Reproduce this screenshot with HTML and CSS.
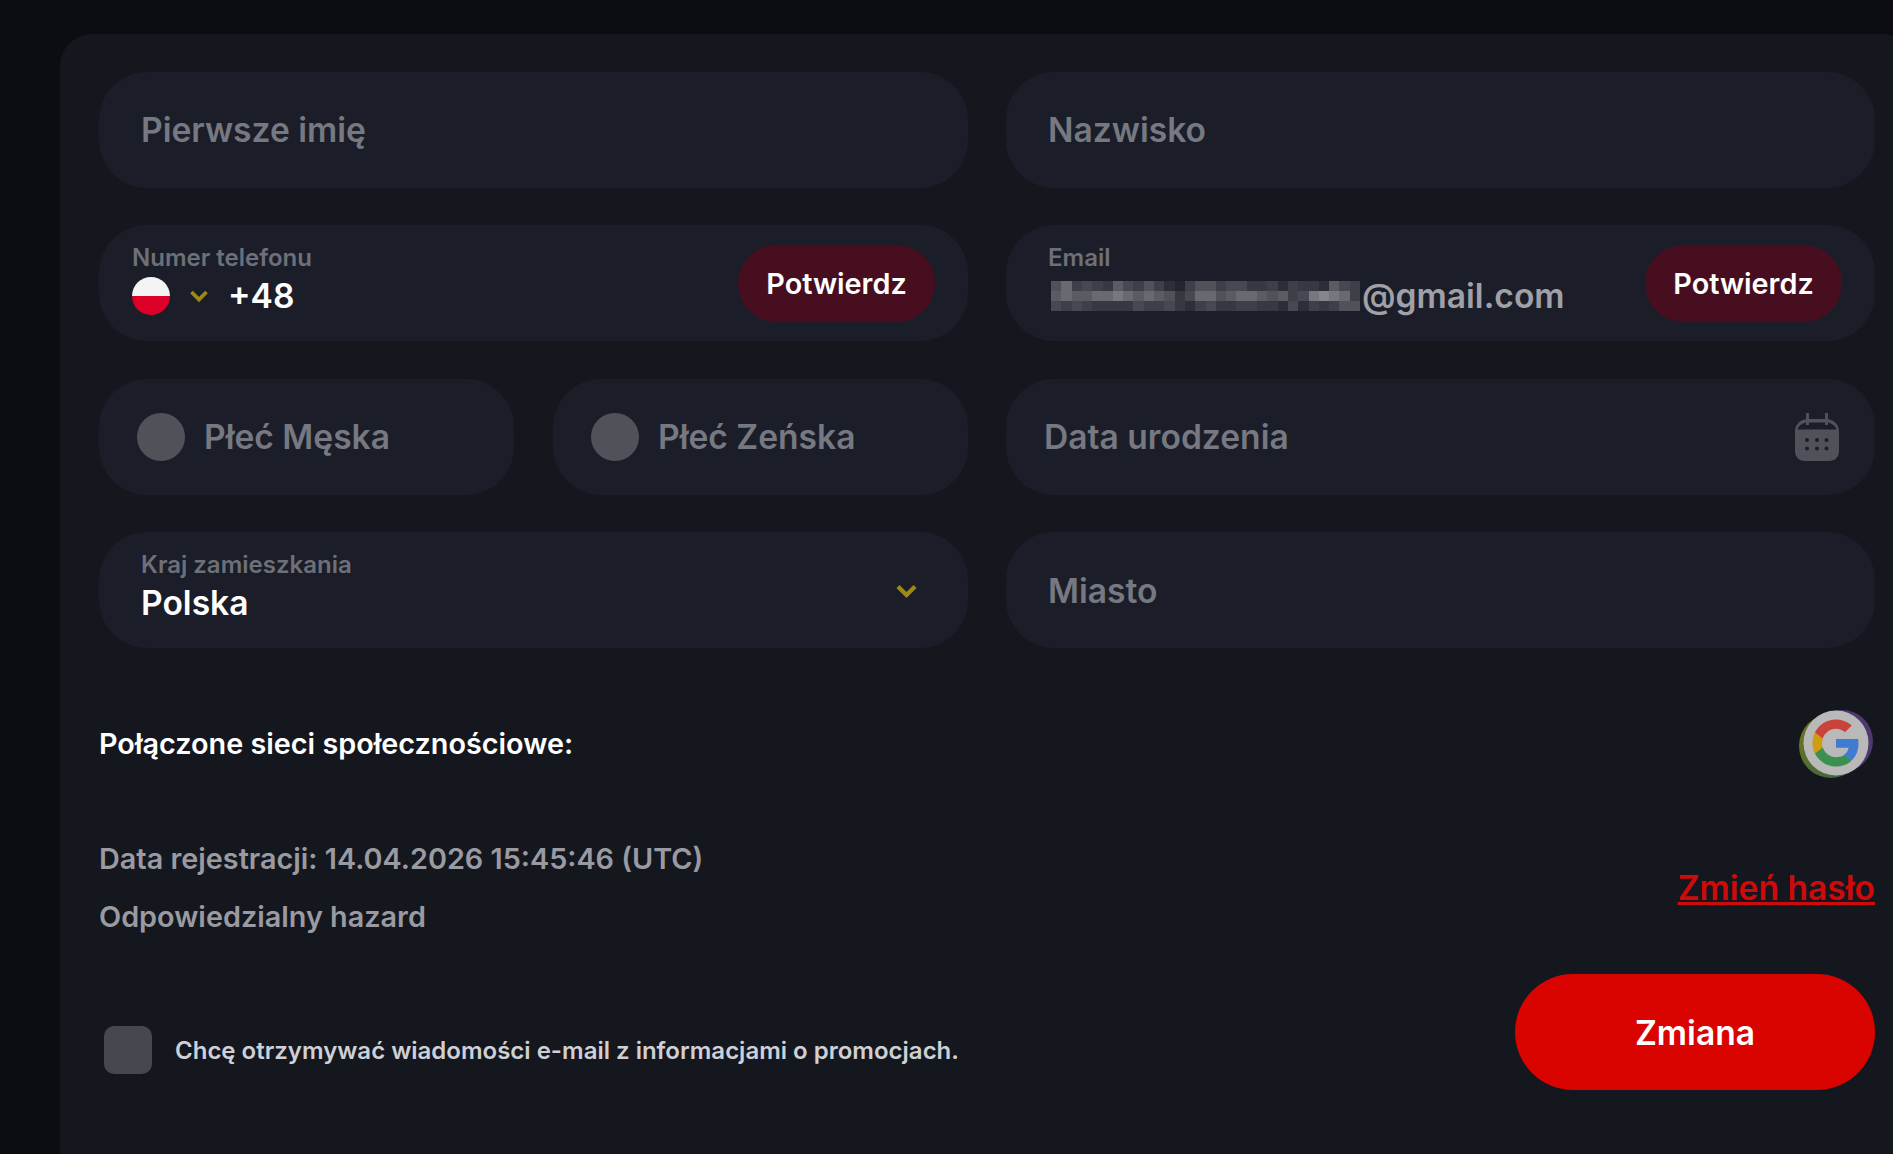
FILE: index.html
```html
<!DOCTYPE html>
<html lang="pl">
<head>
    <meta charset="UTF-8">
    <meta name="viewport" content="width=device-width, initial-scale=1.0">
    <title>Profil</title>
    <link rel="stylesheet" href="styles.css">
</head>
<body>
    <div class="panel">
        <div class="form-grid">
            <div class="field field-plain">Pierwsze imię</div>
            <div class="field field-plain">Nazwisko</div>

            <div class="field field-phone">
                <div class="field-body">
                    <div class="field-label">Numer telefonu</div>
                    <div class="phone-row">
                        <svg class="flag" viewBox="0 0 38 38">
                            <defs><clipPath id="flag-clip"><circle cx="19" cy="19" r="19"/></clipPath></defs>
                            <g clip-path="url(#flag-clip)">
                                <rect width="38" height="19" fill="#f4f4f4"/>
                                <rect y="19" width="38" height="19" fill="#dc0028"/>
                            </g>
                        </svg>
                        <svg class="chevron" viewBox="0 0 20 14"><path d="M2.500 3 L10 10.500 L17.500 3" fill="none" stroke="#9c8a14" stroke-width="3.8"/></svg>
                        <span class="phone-code">+48</span>
                    </div>
                </div>
                <button class="confirm">Potwierdz</button>
            </div>
            <div class="field field-email">
                <div class="field-body">
                    <div class="field-label">Email</div>
                    <div class="email-row">
                        <div class="blur-mask" id="blur-mask"></div>
                        <span>@gmail.com</span>
                    </div>
                </div>
                <button class="confirm">Potwierdz</button>
            </div>

            <div class="gender-pair">
                <div class="field field-gender"><span class="radio"></span>Płeć Męska</div>
                <div class="field field-gender"><span class="radio"></span>Płeć Zeńska</div>
            </div>
            <div class="field field-date">
                <span>Data urodzenia</span>
                <svg class="calendar" viewBox="0 0 44 48">
                    <path fill="#50525a" d="M11 0h3v6h16V0h3v6.200C39.500 7 44 12 44 18v20c0 6-4 10-10 10H10C4 48 0 44 0 38V18C0 12 4.500 7 11 6.200z"/>
                    <path fill="#1b1e28" d="M11 9.500v2.500h3V9.500h16V12h3V9.500C37 10.500 40.500 13 41.500 16.500h-39C3.500 13 7 10.500 11 9.500z"/>
                    <g fill="#1b1e28">
                        <circle cx="12" cy="27" r="2"/><circle cx="22" cy="27" r="2"/><circle cx="31.500" cy="27" r="2"/>
                        <circle cx="12" cy="35.500" r="2"/><circle cx="22" cy="35.500" r="2"/><circle cx="31.500" cy="35.500" r="2"/>
                    </g>
                </svg>
            </div>

            <div class="field field-country">
                <div class="field-body">
                    <div class="field-label">Kraj zamieszkania</div>
                    <div class="country-value">Polska</div>
                </div>
                <svg class="chevron" viewBox="0 0 20 14"><path d="M2.500 3 L10 10.500 L17.500 3" fill="none" stroke="#9c8a14" stroke-width="3.8"/></svg>
            </div>
            <div class="field field-plain">Miasto</div>
        </div>

        <div class="social-row">
            <div class="social-title">Połączone sieci społecznościowe:</div>
            <svg class="google" viewBox="0 -2 78 70">
                <defs>
                    <linearGradient id="google-back" x1="0" y1="0" x2="0.700" y2="1">
                        <stop offset="0" stop-color="#7a7220"/>
                        <stop offset="1" stop-color="#3b6a3c"/>
                    </linearGradient>
                </defs>
                <circle cx="45" cy="31" r="31" fill="#4c3a6c"/>
                <circle cx="34" cy="36" r="32" fill="url(#google-back)"/>
                <circle cx="39" cy="33" r="32.500" fill="#b9b9b9"/>
                <g transform="translate(15.500 9.500) scale(0.979)">
                    <path fill="#3f7bd0" d="M47 24.500c0-1.600-.1-3.200-.4-4.700H24v9h13c-.6 3-2.300 5.500-4.800 7.200v6h7.700C44.400 37.800 47 31.700 47 24.500z"/>
                    <path fill="#3b9050" d="M24 48c6.500 0 11.900-2.100 15.900-5.800l-7.700-6c-2.200 1.500-4.900 2.300-8.200 2.300-6.300 0-11.600-4.200-13.500-9.900H2.500v6.200C6.400 42.600 14.600 48 24 48z"/>
                    <path fill="#d09c12" d="M10.500 28.600c-.5-1.500-.8-3-.8-4.600s.3-3.100.8-4.600v-6.200h-8C.9 16.400 0 20.100 0 24s.9 7.600 2.500 10.800z"/>
                    <path fill="#c8443a" d="M24 9.500c3.500 0 6.700 1.200 9.200 3.600l6.900-6.900C35.900 2.400 30.500 0 24 0 14.600 0 6.400 5.400 2.500 13.200l8 6.200C12.400 13.700 17.700 9.500 24 9.500z"/>
                </g>
            </svg>
        </div>

        <div class="info-row">
            <div class="info-text">
                <div>Data rejestracji: 14.04.2026 15:45:46 (UTC)</div>
                <div>Odpowiedzialny hazard</div>
            </div>
            <a class="change-password" href="#">Zmień hasło</a>
        </div>

        <div class="footer-row">
            <label class="promo">
                <span class="checkbox"></span>
                Chcę otrzymywać wiadomości e-mail z informacjami o promocjach.
            </label>
            <button class="submit">Zmiana</button>
        </div>
    </div>

    <script>
        // pixelated mask over the address: one digit per cell, 0 dark .. 9 light
        var greys = ['#23262f', '#2d2f38', '#363842', '#3e4049', '#474952', '#50525a', '#5a5c64', '#686a71', '#76787e', '#85878c'];
        var cells = '573432643531035534422313221643' +
                    '676677876765247756776563489873' +
                    '434322224334213422332214132355';
        var mask = document.getElementById('blur-mask');
        for (var i = 0; i < cells.length; i++) {
            var cell = document.createElement('i');
            cell.style.background = greys[cells[i]];
            mask.appendChild(cell);
        }
    </script>
</body>
</html>
```

FILE: styles.css
```css
html, body {
    margin: 0;
    height: 100%;
    overflow: hidden;
}
body {
    background: #0b0d13;
    font-family: Inter, 'Noto Sans', sans-serif;
    padding: 34px 0 0 60px;
    box-sizing: border-box;
}
.panel {
    width: 1854px;
    height: 1120px;
    box-sizing: border-box;
    background: #15171f;
    border-radius: 32px 32px 0 0;
    padding: 37.5px 39px 0;
}
.form-grid {
    display: grid;
    grid-template-columns: 869px 869px;
    grid-auto-rows: 116px;
    gap: 37.6px 38px;
}
.field {
    background: #1b1e28;
    border-radius: 48px;
    display: flex;
    align-items: center;
    box-sizing: border-box;
    font-weight: 600;
    font-size: 33.6px;
    color: #767882;
}
.field-plain {
    padding-left: 42px;
}
.field-phone,
.field-email {
    justify-content: space-between;
    padding: 0 33px;
}
.field-email {
    padding-left: 42px;
}
.field-body {
    padding-bottom: 7.8px;
}
.field-label {
    font-size: 24px;
    font-weight: 600;
    color: #6e7079;
    line-height: 30px;
}
.phone-row {
    display: flex;
    align-items: center;
    height: 40px;
    margin-top: 2.8px;
}
.flag {
    width: 38px;
    height: 38px;
}
.chevron {
    width: 20px;
    height: 14px;
}
.phone-row .chevron {
    margin-left: 19px;
}
.phone-code {
    margin-left: 19px;
    color: #fff;
}
.email-row {
    display: flex;
    align-items: center;
    height: 40px;
    margin-top: 2.8px;
    color: #a0a1a8;
}
.blur-mask {
    width: 309px;
    height: 30px;
    display: grid;
    grid-template-columns: repeat(30, 1fr);
    grid-template-rows: repeat(3, 1fr);
    margin: 0 2px 0 3px;
    filter: blur(0.6px);
}
.blur-mask i {
    display: block;
}
.confirm {
    width: 197px;
    height: 77px;
    border: none;
    border-radius: 38px;
    background: #470e1f;
    color: #fff;
    font: 600 28.8px Inter, sans-serif;
}
.gender-pair {
    display: grid;
    grid-template-columns: 415px 415px;
    gap: 39px;
}
.field-gender {
    padding-left: 38px;
}
.radio {
    width: 48px;
    height: 48px;
    border-radius: 50%;
    background: #50525a;
    margin-right: 19px;
}
.field-date {
    justify-content: space-between;
    padding: 0 36px 0 38px;
}
.calendar {
    width: 44px;
    height: 48px;
}
.field-country {
    justify-content: space-between;
    padding: 0 50px 0 42px;
}
.field-country .chevron {
    width: 23px;
    height: 16px;
    margin-top: 2px;
}
.country-value {
    color: #fff;
    line-height: 40px;
    margin-top: 2.8px;
}
.social-row {
    display: flex;
    justify-content: space-between;
    align-items: center;
    margin-top: 60px;
}
.social-title {
    color: #fff;
    font-size: 28.8px;
    font-weight: 600;
}
.google {
    width: 78px;
    height: 70px;
    display: block;
}
.info-row {
    display: flex;
    justify-content: space-between;
    align-items: center;
    margin-top: 52px;
}
.info-text {
    color: #9a9ba2;
    font-size: 28.8px;
    font-weight: 600;
    line-height: 58px;
}
.change-password {
    color: #cf0a0a;
    font-size: 33.6px;
    font-weight: 600;
    margin-bottom: 2px;
}
.footer-row {
    display: flex;
    justify-content: space-between;
    align-items: flex-start;
    margin-top: 28px;
}
.promo {
    display: flex;
    align-items: center;
    color: #cfd0d6;
    font-size: 24px;
    font-weight: 600;
    margin: 52px 0 0 5px;
}
.checkbox {
    width: 48px;
    height: 48px;
    border-radius: 10px;
    background: #46474f;
    margin-right: 23px;
}
.submit {
    width: 360px;
    height: 116px;
    border: none;
    border-radius: 58px;
    background: #d90400;
    color: #fff;
    font: 600 33.6px Inter, sans-serif;
}
```
